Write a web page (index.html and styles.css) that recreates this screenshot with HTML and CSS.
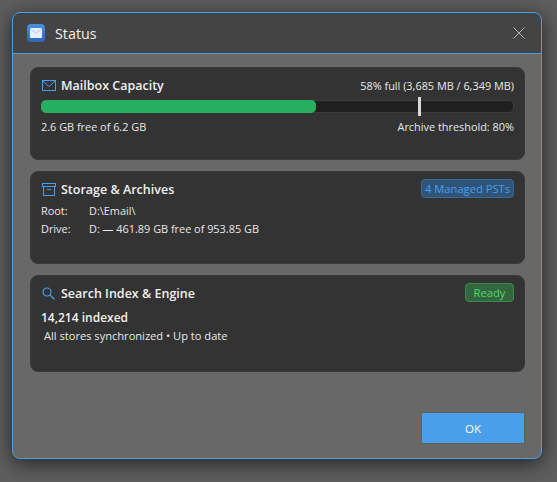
FILE: index.html
```html
<!DOCTYPE html>
<html lang="en">
<head>
  <meta charset="UTF-8" />
  <title>Status</title>
  <link rel="stylesheet" href="styles.css">
</head>
<body>
  <div class="dialog">
    <div class="titlebar">
      <div class="app-icon">
        <svg width="12" height="10" viewBox="0 0 12 10">
          <rect width="12" height="10" rx="1" fill="#e8eef8" />
          <path d="M0.5 1 L6 5 L11.5 1" fill="none" stroke="#b4cbec" stroke-width="1" />
        </svg>
      </div>
      <span class="title">Status</span>
      <svg class="close" width="12" height="12" viewBox="0 0 12 12">
        <path d="M0.5 0.5 L11.5 11.5 M11.5 0.5 L0.5 11.5" stroke="#b4b4b4" stroke-width="1" fill="none" />
      </svg>
    </div>

    <div class="content">
      <!-- Mailbox -->
      <div class="card">
        <div class="card-head">
          <svg class="card-icon" width="14" height="11" viewBox="0 0 14 11">
            <rect x="0.5" y="0.5" width="13" height="10" fill="none" stroke="#4a9eea" />
            <path d="M1 1 L7 6.5 L13 1" fill="none" stroke="#4a9eea" />
          </svg>
          <span class="card-title">Mailbox Capacity</span>
          <span class="right-text">58% full (3,685 MB / 6,349 MB)</span>
        </div>
        <div class="bar">
          <div class="bar-fill"></div>
          <div class="threshold"></div>
        </div>
        <div class="bar-foot">
          <span>2.6 GB free of 6.2 GB</span>
          <span>Archive threshold: 80%</span>
        </div>
      </div>

      <!-- Storage -->
      <div class="card">
        <div class="card-head">
          <svg class="card-icon" width="14" height="13" viewBox="0 0 14 13">
            <rect x="0.5" y="0.5" width="13" height="3" fill="none" stroke="#4a9eea" />
            <path d="M1.5 3.5 V12.5 H12.5 V3.5 M5 6.5 H9" fill="none" stroke="#4a9eea" />
          </svg>
          <span class="card-title">Storage &amp; Archives</span>
          <span class="badge badge-blue">4 Managed PSTs</span>
        </div>
        <div class="info-row first"><span class="info-label">Root:</span><span>D:\Email\</span></div>
        <div class="info-row"><span class="info-label">Drive:</span><span>D: — 461.89 GB free of 953.85 GB</span></div>
      </div>

      <!-- Search -->
      <div class="card card-tall">
        <div class="card-head">
          <svg class="card-icon" width="14" height="13" viewBox="0 0 14 13">
            <circle cx="5" cy="5" r="4" fill="none" stroke="#4a9eea" stroke-width="1.2" />
            <path d="M8 8 L12.5 12.5" stroke="#4a9eea" stroke-width="1.3" />
          </svg>
          <span class="card-title">Search Index &amp; Engine</span>
          <span class="badge badge-green">Ready</span>
        </div>
        <div class="indexed">14,214 indexed</div>
        <div class="sync">All stores synchronized • Up to date</div>
      </div>
    </div>

    <div class="footer">
      <button class="ok-btn">OK</button>
    </div>
  </div>
</body>
</html>
```

FILE: styles.css
```css
html, body {
  height: 100%;
}

body {
  margin: 0;
  padding: 12px 15px 22px 12px;
  box-sizing: border-box;
  background: #5e5e5e;
  font-family: "Open Sans", "Noto Sans", sans-serif;
  font-size: 10.9px;
  color: #e8e8e8;
  overflow: hidden;
}

/* Dialog window */
.dialog {
  display: flex;
  flex-direction: column;
  width: 530px;
  height: 447px;
  box-sizing: border-box;
  background: #686868;
  border: 1px solid #4a9eea;
  border-radius: 8px;
  box-shadow: 0 4px 20px rgba(0, 0, 0, 0.65);
  overflow: hidden;
}

.titlebar {
  display: flex;
  align-items: center;
  flex: none;
  height: 41px;
  box-sizing: border-box;
  padding: 0 16px 0 14px;
  background: #444444;
  border-bottom: 1px solid #4a9eea;
}

.app-icon {
  display: flex;
  align-items: center;
  justify-content: center;
  width: 18px;
  height: 18px;
  margin-right: 10px;
  border-radius: 4px;
  background: linear-gradient(180deg, #4a90e2, #2f66b8);
}

.title {
  flex: 1;
  padding-top: 1px;
  font-size: 14.3px;
  color: #f0f0f0;
}

/* Cards */
.content {
  display: flex;
  flex-direction: column;
  gap: 11px;
  padding: 13px 16px 0 17px;
}

.card {
  height: 93px;
  box-sizing: border-box;
  padding: 7px 10px 0 10px;
  background: #333333;
  border: 1px solid #3a3a3a;
  border-radius: 8px;
}

.card-tall {
  height: 97px;
}

.card-head {
  display: flex;
  align-items: center;
  height: 20px;
}

.card-icon {
  flex: none;
  margin: 0 5px 0 1px;
}

.card-title {
  flex: 1;
  font-size: 12.5px;
  font-weight: 600;
  color: #f0f0f0;
}

.right-text {
  color: #e8e8e8;
}

/* Progress bar */
.bar {
  position: relative;
  height: 13px;
  margin-top: 5px;
  box-sizing: border-box;
  background: #202020;
  border: 1px solid #3c3c3c;
  border-radius: 5px;
}

.bar-fill {
  width: 58.4%;
  height: 100%;
  margin: -1px 0 0 -1px;
  padding: 1px 0;
  background: #27ae60;
  border-radius: 5px;
}

.threshold {
  position: absolute;
  left: 376px;
  top: -4px;
  width: 3px;
  height: 19px;
  background: #d8d8d8;
}

.bar-foot {
  display: flex;
  justify-content: space-between;
  margin-top: 6px;
}

/* Badges */
.badge {
  height: 19px;
  margin-bottom: 1px;
  box-sizing: border-box;
  border: 1px solid;
  border-radius: 4px;
  line-height: 17px;
  text-align: center;
}

.badge-blue {
  width: 93px;
  font-size: 11.2px;
  color: #4a9eea;
  background: #2f5478;
  border-color: #3b6a98;
}

.badge-green {
  width: 49px;
  font-size: 11.2px;
  color: #4cd964;
  background: #33663f;
  border-color: #3c8a4c;
}

.info-row {
  display: flex;
  height: 18px;
  line-height: 18px;
}

.info-row.first {
  margin-top: 3px;
}

.info-label {
  width: 48px;
}

.indexed {
  margin-top: 6px;
  font-size: 12px;
  font-weight: 600;
  color: #f0f0f0;
}

.sync {
  margin: 2px 0 0 3px;
  font-size: 11.1px;
}

/* Footer */
.footer {
  display: flex;
  justify-content: flex-end;
  margin-top: auto;
  padding: 0 16px 14px 0;
}

.ok-btn {
  width: 104px;
  height: 32px;
  background: #4a9eea;
  border: 1px solid #606060;
  color: #ffffff;
  font-family: inherit;
  font-size: 11.5px;
}
```
